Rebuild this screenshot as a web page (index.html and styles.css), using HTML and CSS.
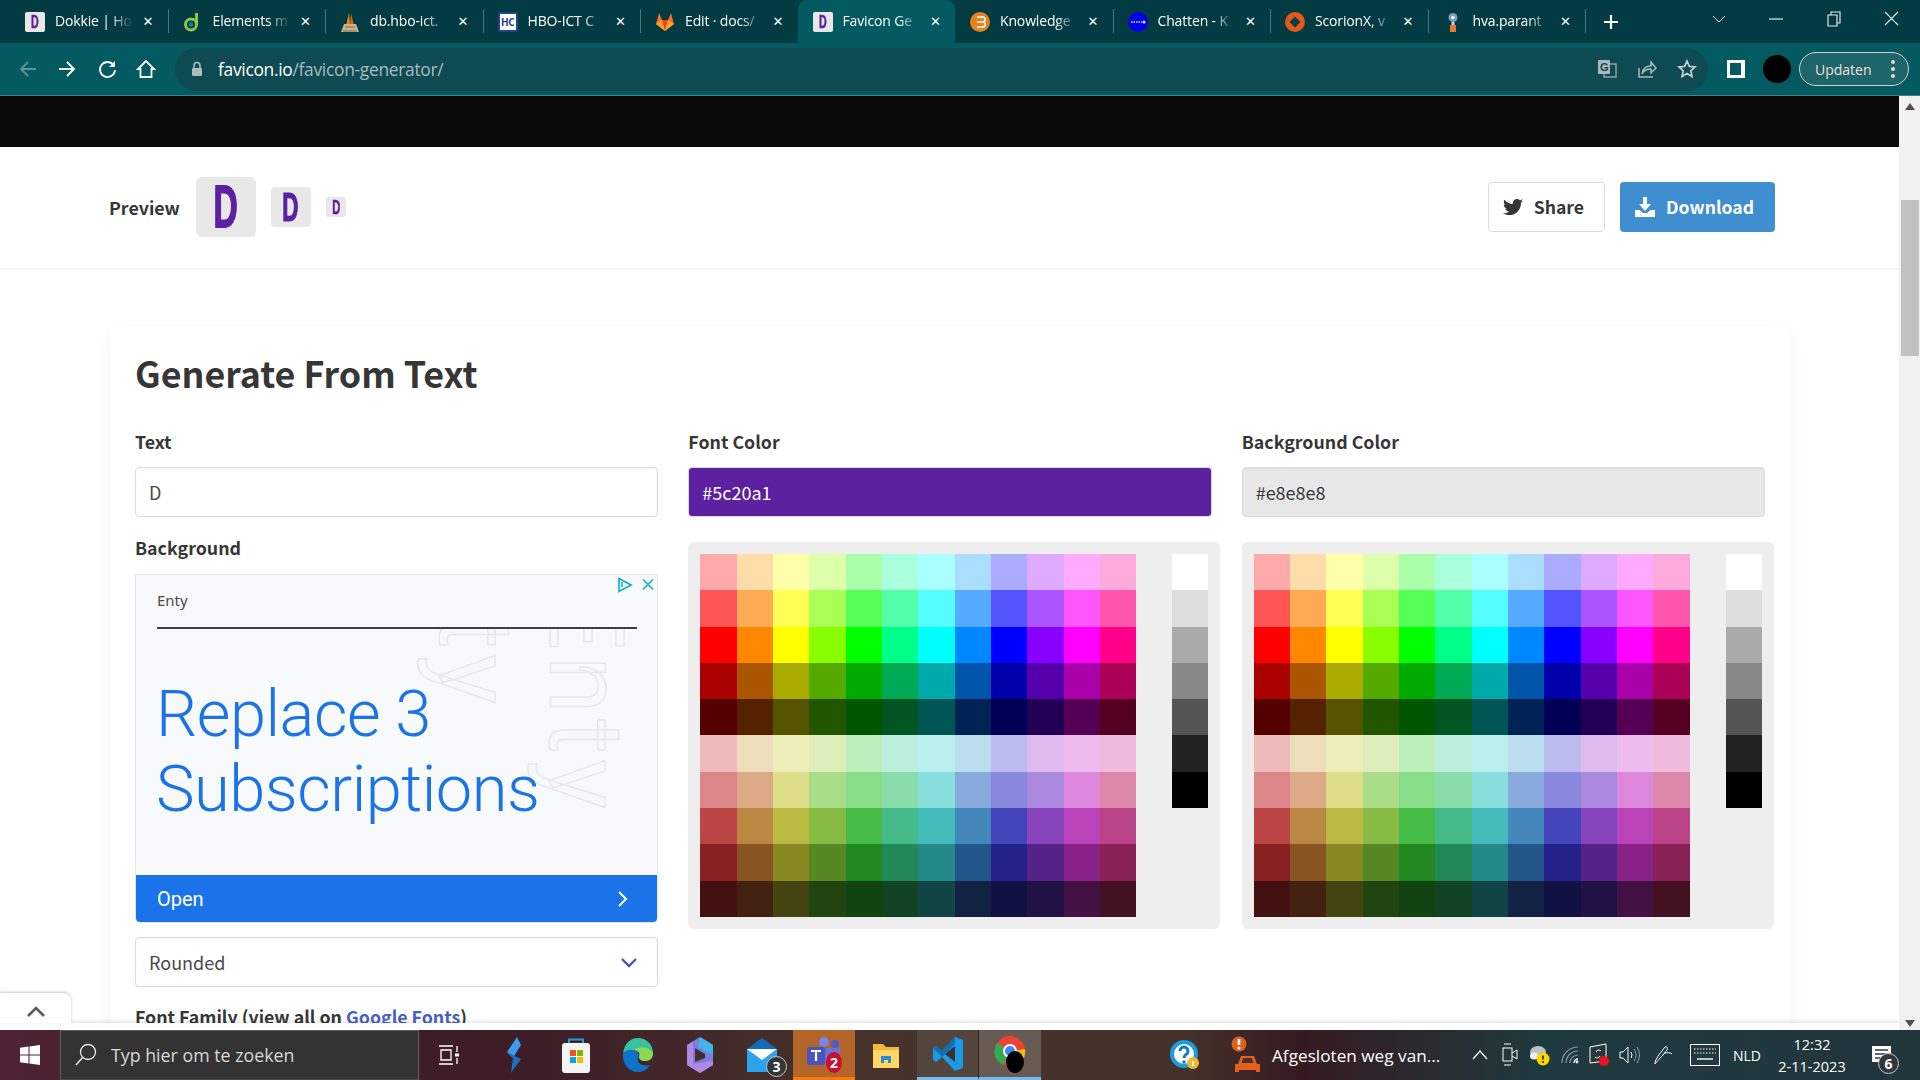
FILE: index.html
```html
<!DOCTYPE html>
<html>
<head>
<meta charset="utf-8">
<title>Favicon Generator - favicon.io</title>
<link rel="stylesheet" href="styles.css">
</head>
<body>

<!-- browser: tabs -->
<div class="tabstrip">
  <div class="tab">
    <span class="dtile fav"><b>D</b></span>
    <span class="tab-title">Dokkie | Ho</span><span class="tab-x">&#10005;</span>
  </div>
  <div class="tab">
    <svg class="fav" viewBox="0 0 20 20"><circle cx="8" cy="12.5" r="5.5" fill="none" stroke="#8cc63f" stroke-width="3"/><circle cx="8" cy="12.5" r="2.2" fill="#0a7fc2"/><path d="M13.5 1v12" stroke="#8cc63f" stroke-width="3"/></svg>
    <span class="tab-title">Elements m</span><span class="tab-x">&#10005;</span>
  </div>
  <div class="tab">
    <svg class="fav" viewBox="0 0 20 20"><path d="M6 14 9 1l1 13z" fill="#f08a1d"/><path d="M10 14 11 1l3 13z" fill="#e86a12"/><path d="M1 20 4 12h12l3 8z" fill="#c9b48a"/><path d="M3 19h14M5 15h10" stroke="#7a6a52" stroke-width="1.2"/></svg>
    <span class="tab-title">db.hbo-ict.</span><span class="tab-x">&#10005;</span>
  </div>
  <div class="tab">
    <span class="hc fav">HC</span>
    <span class="tab-title">HBO-ICT C</span><span class="tab-x">&#10005;</span>
  </div>
  <div class="tab">
    <svg class="fav" viewBox="0 0 20 20"><path d="M10 19 1 12l1.5-5L4 1l3 7h6l3-7 1.5 6 1.500 5z" fill="#fc6d26"/><path d="M10 19 7 8h6z" fill="#e24329"/><path d="M1 12l6-4 3 11zM19 12l-6-4-3 11z" fill="#fca326"/></svg>
    <span class="tab-title">Edit · docs/</span><span class="tab-x">&#10005;</span>
  </div>
  <div class="tab active">
    <span class="dtile fav"><b>D</b></span>
    <span class="tab-title">Favicon Ge</span><span class="tab-x">&#10005;</span>
  </div>
  <div class="tab">
    <svg class="fav" viewBox="0 0 20 20"><circle cx="10" cy="10" r="10" fill="#e8821e"/><path d="M7 5h5.500a2.500 2.500 0 0 1 0 5 2.500 2.500 0 0 1 0 5H7M7 10h5" fill="none" stroke="#fff" stroke-width="1.600"/></svg>
    <span class="tab-title">Knowledge</span><span class="tab-x">&#10005;</span>
  </div>
  <div class="tab">
    <svg class="fav" viewBox="0 0 20 20"><circle cx="10" cy="10" r="10" fill="#0000e6"/><path d="M3 10h11" stroke="#cfd3ff" stroke-width="1.400" stroke-dasharray="1.500 1"/><circle cx="16" cy="10" r="1.500" fill="#e8e8ff"/></svg>
    <span class="tab-title">Chatten - K</span><span class="tab-x">&#10005;</span>
  </div>
  <div class="tab">
    <svg class="fav" viewBox="0 0 20 20"><circle cx="10" cy="10" r="10" fill="#e4591a"/><path d="M10 4.500 15.500 10 10 15.500 4.500 10z" fill="#04404a"/></svg>
    <span class="tab-title">ScorionX, v</span><span class="tab-x">&#10005;</span>
  </div>
  <div class="tab">
    <svg class="fav" viewBox="0 0 20 20"><circle cx="10" cy="5.500" r="4.500" fill="#7c9cc0"/><circle cx="10" cy="5.500" r="1.800" fill="#eef3f8"/><rect x="8.500" y="10" width="3" height="3" fill="#c8d4e0"/><rect x="7" y="13" width="6" height="7" fill="#e8762a"/></svg>
    <span class="tab-title">hva.parant</span><span class="tab-x">&#10005;</span>
  </div>
  <div class="newtab">
    <svg width="16" height="16" viewBox="0 0 16 16"><path d="M8 1v14M1 8h14" stroke="#fff" stroke-width="2.200"/></svg>
  </div>
  <div class="winctl">
    <span class="winbtn"><svg width="14" height="8" viewBox="0 0 14 8"><path d="M1 1l6 6 6-6" fill="none" stroke="#c7d6d8" stroke-width="1"/></svg></span>
    <span class="winbtn"><svg width="14" height="2" viewBox="0 0 14 2"><path d="M0 1h14" stroke="#dfe8e9" stroke-width="1.200"/></svg></span>
    <span class="winbtn"><svg width="14" height="16" viewBox="0 0 14 16"><path d="M1 4h9v11H1zM4 4V1h9v11h-3" fill="none" stroke="#dfe8e9" stroke-width="1.200"/></svg></span>
    <span class="winbtn"><svg width="15" height="15" viewBox="0 0 15 15"><path d="M1 1l13 13M14 1 1 14" stroke="#dfe8e9" stroke-width="1.100"/></svg></span>
  </div>
</div>

<!-- browser: address bar -->
<div class="toolbar">
  <span class="navbtn"><svg width="20" height="20" viewBox="0 0 20 20"><path d="M18 10H3M10 3l-7 7 7 7" fill="none" stroke="#5f9296" stroke-width="1.800"/></svg></span>
  <span class="navbtn"><svg width="20" height="20" viewBox="0 0 20 20"><path d="M2 10h15M10 3l7 7-7 7" fill="none" stroke="#fff" stroke-width="1.800"/></svg></span>
  <span class="navbtn"><svg width="20" height="20" viewBox="0 0 20 20"><path d="M16.500 6A7.500 7.500 0 1 0 18 11" fill="none" stroke="#fff" stroke-width="1.800"/><path d="M18 2v6h-6z" fill="#fff"/></svg></span>
  <span class="navbtn"><svg width="20" height="20" viewBox="0 0 20 20"><path d="M10 2 2 10h2.500v8h11v-8H18z" fill="none" stroke="#fff" stroke-width="1.800"/></svg></span>
  <div class="omnibox">
    <svg class="lock" width="14" height="16" viewBox="0 0 14 16"><path d="M4 7V4.500a3 3 0 0 1 6 0V7" fill="none" stroke="#aebcbe" stroke-width="1.600"/><rect x="2" y="7" width="10" height="8" rx="1" fill="#aebcbe"/></svg>
    <span class="url"><span class="url-host">favicon.io</span>/favicon-generator/</span>
    <span class="omni-icons">
      <span class="omni-btn"><svg width="20" height="20" viewBox="0 0 20 20"><rect x="7" y="5" width="12" height="13" fill="none" stroke="#a9b8ba" stroke-width="1.200"/><rect x="1" y="1" width="12" height="14" rx="1" fill="#a9b8ba"/><text x="3" y="12" class="g-glyph">G</text></svg></span>
      <span class="omni-btn"><svg width="20" height="20" viewBox="0 0 20 20"><path d="M2 9v9h14" fill="none" stroke="#a9b8ba" stroke-width="1.500"/><path d="M5 15c0-5 4-8 9-8V3l5 6-5 5v-4c-4 0-7 1-9 5z" fill="none" stroke="#a9b8ba" stroke-width="1.500"/></svg></span>
      <span class="omni-btn"><svg width="20" height="20" viewBox="0 0 20 20"><path d="m10 2 2.400 5.400 5.600.6-4.200 3.800 1.200 5.700L10 14.600l-5 2.900 1.200-5.700L2 8l5.600-.6z" fill="none" stroke="#c3cfd0" stroke-width="1.700"/></svg></span>
    </span>
  </div>
  <span class="sidebtn"><span class="sidepanel"></span></span>
  <span class="avatarbtn"><span class="avatar"></span></span>
  <span class="update">Updaten<span class="update-dots"><i></i><i></i><i></i></span></span>
</div>

<!-- page -->
<div class="viewport">
  <div class="page">
    <div class="blackbar"></div>
    <div class="previewbar">
      <strong class="preview-label">Preview</strong>
      <span class="dtile size60"><b>D</b></span>
      <span class="dtile size40"><b>D</b></span>
      <span class="dtile size20"><b>D</b></span>
      <span class="preview-actions">
        <a class="btn">
          <svg width="20" height="20" viewBox="0 0 512 512"><path fill="#363636" d="M459.37 151.716c.325 4.548.325 9.097.325 13.645 0 138.72-105.583 298.558-298.558 298.558-59.452 0-114.68-17.219-161.137-47.106 8.447.974 16.568 1.299 25.34 1.299 49.055 0 94.213-16.568 130.274-44.832-46.132-.975-84.792-31.188-98.112-72.772 6.498.974 12.995 1.624 19.818 1.624 9.421 0 18.843-1.3 27.614-3.573-48.081-9.747-84.143-51.98-84.143-102.985v-1.299c13.969 7.797 30.214 12.67 47.431 13.319-28.264-18.843-46.781-51.005-46.781-87.391 0-19.492 5.197-37.36 14.294-52.954 51.655 63.675 129.3 105.258 216.365 109.807-1.624-7.797-2.599-15.918-2.599-24.04 0-57.828 46.782-104.934 104.934-104.934 30.213 0 57.502 12.67 76.67 33.137 23.715-4.548 46.456-13.32 66.599-25.34-7.798 24.366-24.366 44.833-46.132 57.827 21.117-2.273 41.584-8.122 60.426-16.243-14.292 20.791-32.161 39.308-52.628 54.253z"/></svg>
          Share
        </a>
        <a class="btn btn-info">
          <svg width="20" height="20" viewBox="0 0 20 20"><path d="M8 0h4v7h4l-6 7-6-7h4z" fill="#fff"/><path d="M0 13h4.500l3.500 3h4l3.500-3H20v7H0z" fill="#fff"/></svg>
          Download
        </a>
      </span>
    </div>

    <div class="card">
      <h2 class="card-title">Generate From Text</h2>
      <div class="columns">
        <div class="column">
          <label class="label">Text</label>
          <div class="input">D</div>
          <label class="label label-next">Background</label>
          <div class="ad">
            <div class="ad-brand">Enty</div>
            <div class="ad-rule"></div>
            <div class="ad-ghost">
              <span class="ghost ghost-a">Enty</span>
              <span class="ghost ghost-b">Enty</span>
            </div>
            <div class="ad-head">Replace 3<br>Subscriptions</div>
            <div class="ad-open">Open
              <svg width="12" height="18" viewBox="0 0 12 18"><path d="m2 2 7 7-7 7" fill="none" stroke="#fff" stroke-width="2"/></svg>
            </div>
            <svg class="ad-info" width="38" height="16" viewBox="0 0 38 16"><path d="M2 1.500 14 8 2 14.500z" fill="none" stroke="#00aecd" stroke-width="1.600"/><path d="M5 5v5" stroke="#00aecd" stroke-width="1.400"/><path d="m26 2.500 10 10M36 2.500l-10 10" stroke="#00aecd" stroke-width="1.400"/></svg>
          </div>
          <div class="input select">Rounded
            <svg width="18" height="11" viewBox="0 0 18 11"><path d="m2 2 7 7 7-7" fill="none" stroke="#4a52bd" stroke-width="2.400"/></svg>
          </div>
          <label class="label label-font">Font Family (view all on <a class="link">Google Fonts</a>)</label>
        </div>

        <div class="column">
          <label class="label">Font Color</label>
          <div class="input input-font">#5c20a1</div>
          <div class="picker"><div class="swatches"></div><div class="grays"></div></div>
        </div>

        <div class="column">
          <label class="label">Background Color</label>
          <div class="input input-bg">#e8e8e8</div>
          <div class="picker"><div class="swatches"></div><div class="grays"></div></div>
        </div>
      </div>
    </div>

    <div class="anchor-strip"></div>
    <div class="anchor-tab">
      <svg width="20" height="12" viewBox="0 0 20 12"><path d="m2 10 8-8 8 8" fill="none" stroke="#5a5a5a" stroke-width="2.600"/></svg>
    </div>
  </div>
  <div class="scrollbar">
    <span class="arrow-up"></span>
    <span class="thumb"></span>
    <span class="arrow-down"></span>
  </div>
</div>

<!-- windows taskbar -->
<div class="taskbar">
  <span class="startbtn"><svg width="20" height="20" viewBox="0 0 20 20"><path d="M0 2.800 8.500 1.600v8H0zM9.500 1.500 20 0v9.600H9.500zM0 10.500h8.500v8L0 17.200zM9.500 10.500H20V20L9.500 18.600z" fill="#fff"/></svg></span>
  <div class="searchbox">
    <svg width="22" height="24" viewBox="0 0 22 24"><circle cx="13" cy="9" r="7.500" fill="none" stroke="#e6e6e6" stroke-width="1.300"/><path d="M7.500 14.500 1 22" stroke="#e6e6e6" stroke-width="1.500"/></svg>
    <span>Typ hier om te zoeken</span>
  </div>
  <span class="taskview"><svg width="22" height="20" viewBox="0 0 22 20"><path d="M0 1h14M0 19h14M2 5h10v10H2zM18 1v6M18 13v6" fill="none" stroke="#fff" stroke-width="1.300"/><rect x="16" y="8.500" width="4" height="3" fill="#fff"/></svg></span>

  <span class="task"><svg width="16" height="36" viewBox="0 0 16 36"><path d="M11 0 1 15l6 6 8-13z" fill="#3a9bef"/><path d="M7 21 1 15l14 7L5 36z" fill="#1f6fc4"/></svg></span>
  <span class="task"><svg width="30" height="36" viewBox="0 0 30 36"><path d="M8 8V2.500h14V8" fill="none" stroke="#1aa3e0" stroke-width="2"/><rect x="1" y="6" width="28" height="30" rx="3" fill="#f4f4f4"/><rect x="9" y="13" width="6" height="6" fill="#f25022"/><rect x="16" y="13" width="6" height="6" fill="#7fba00"/><rect x="9" y="20" width="6" height="6" fill="#00a4ef"/><rect x="16" y="20" width="6" height="6" fill="#ffb900"/></svg></span>
  <span class="task"><svg width="32" height="36" viewBox="0 0 32 36"><path d="M1 17C2 7 8 1 16 1c9 0 15 7 15 15 0 5-3 8-8 8-4 0-6-2-6-4 2-4-1-7-6-7-5 0-9 2-10 4z" fill="#36c2a0"/><path d="M1 17c2-3 6-5 9-4 5 0 8 3 6 8-1 5 4 9 12 7-3 5-7 7-12 7C7 35 0 27 1 17z" fill="#0f72c9"/><path d="M31 16c0 5-3 8-8 8-4 0-6-2-6-4 2-4-1-7-6-7 9-5 16-3 20 3z" fill="#8ed850"/></svg></span>
  <span class="task"><svg width="28" height="36" viewBox="0 0 28 36"><path d="M14 0 27 8v20l-13 8L1 28V8z" fill="#7d7de0"/><path d="M14 0 27 8v10L12 10z" fill="#3fb6e8"/><path d="M1 8l6-3v22l20-3v4l-13 8L1 28z" fill="#b287e6"/><path d="M9 11l10 6v4l-10 4z" fill="#40302c"/></svg></span>
  <span class="task task-mail"><svg width="32" height="36" viewBox="0 0 32 36"><path d="M16 1 1 12h30z" fill="#0f6cbd"/><rect x="1" y="12" width="30" height="23" fill="#2aa3ec"/><path d="M1 12h30L16 23z" fill="#fff"/></svg><span class="badge badge-ring">3</span></span>
  <span class="task task-on"><svg width="34" height="36" viewBox="0 0 34 36"><circle cx="17" cy="6" r="5" fill="#7b83eb"/><circle cx="28" cy="8" r="4" fill="#5059c9"/><path d="M11 12h22v14H11z" fill="#6a72d8"/><rect x="0" y="11" width="18" height="18" rx="2" fill="#4b53bc"/><path d="M4 15h10M9 15v10" stroke="#fff" stroke-width="2.200"/></svg><span class="badge badge-red">2</span></span>
  <span class="task"><svg width="28" height="28" viewBox="0 0 28 28"><path d="M1 3h10l3 3h13v21H1z" fill="#f2b63d"/><path d="M1 9h26v18H1z" fill="#ffd763"/><path d="M9 22v-7h10v7h-3v-3h-4v3z" fill="#2d8ad6"/></svg></span>
  <span class="task task-open"><svg width="30" height="36" viewBox="0 0 30 36"><path d="M22 1 9 15 3 10 0 12v12l3 2 6-5 13 14 8-3V4z" fill="#1a9ae8"/><path d="M22 10v16l-10-8z" fill="#3f2f28"/><path d="M22 1 9 15 3 10 0 12l9 9L22 8z" fill="#0c6fb8"/></svg></span>
  <span class="task task-open task-chrome"><svg width="32" height="38" viewBox="0 0 32 38"><circle cx="16" cy="16" r="15" fill="#ea4335"/><path d="M16 16 3 8A15 15 0 0 0 9 30z" fill="#34a853"/><path d="M16 16 31 14A15 15 0 0 1 12 31z" fill="#fbbc05"/><circle cx="16" cy="16" r="7" fill="#fff"/><circle cx="16" cy="16" r="5" fill="#4285f4"/><ellipse cx="21" cy="27" rx="9" ry="11" fill="#000"/></svg></span>

  <span class="helpicon"><svg width="30" height="30" viewBox="0 0 30 30"><circle cx="14" cy="14" r="12" fill="#fff" stroke="#1b9be0" stroke-width="4"/><path d="M10 11a4 4 0 1 1 6 3.500c-1.500 1-2 1.500-2 3.500" fill="none" stroke="#1478c8" stroke-width="3"/><circle cx="14" cy="22" r="1.800" fill="#1478c8"/><circle cx="23" cy="23" r="6" fill="#f2b630"/><path d="M23 21v5" stroke="#fff" stroke-width="2"/></svg></span>
  <div class="alert">
    <svg width="30" height="38" viewBox="0 0 30 38"><circle cx="8" cy="8" r="7.500" fill="#e2601c"/><path d="M8 3v6" stroke="#fff" stroke-width="2.600"/><circle cx="8" cy="12" r="1.500" fill="#fff"/><path d="M7 28l3-8h13l3 8h3v8h-4v-2H8v2H4v-8z" fill="#e2601c"/><path d="M10.500 27l1.800-5h8.400l1.800 5z" fill="#45302a"/></svg>
    <span>Afgesloten weg van...</span>
  </div>
  <div class="tray">
    <span class="tray-cell"><svg width="16" height="10" viewBox="0 0 16 10"><path d="M1 9l7-8 7 8" fill="none" stroke="#fff" stroke-width="1.200"/></svg></span>
    <span class="tray-cell"><svg width="16" height="24" viewBox="0 0 16 24"><rect x="1" y="5" width="9" height="13" fill="none" stroke="#fff"/><path d="M10 10l5-3v9l-5-3M2 1h7M2 22h7" fill="none" stroke="#fff"/></svg></span>
    <span class="tray-cell"><svg width="22" height="24" viewBox="0 0 22 24"><ellipse cx="9" cy="9" rx="8" ry="6" fill="#b9c2c4"/><ellipse cx="5" cy="13" rx="4" ry="3.500" fill="#eef1f2"/><circle cx="14" cy="16" r="6.500" fill="#ffd500"/><path d="M14 12.500v4" stroke="#222" stroke-width="1.600"/><circle cx="14" cy="19" r="1" fill="#222"/></svg></span>
    <span class="tray-cell"><svg width="18" height="18" viewBox="0 0 18 18"><path d="M1 17A16 16 0 0 1 17 1M5 17A12 12 0 0 1 17 5M9 17a8 8 0 0 1 8-8" fill="none" stroke="#8d9a9c" stroke-width="1.200"/><path d="M13 17a4 4 0 0 1 4-4" fill="none" stroke="#fff" stroke-width="1.400"/><circle cx="16" cy="16" r="1.400" fill="#fff"/></svg></span>
    <span class="tray-cell"><svg width="22" height="24" viewBox="0 0 22 24"><path d="M1 4l16-3v17L1 20z" fill="#26363a" stroke="#fff"/><path d="M7 9a3 3 0 0 1 5-1M11 13a3 3 0 0 1-5 1" fill="none" stroke="#fff"/><circle cx="15" cy="18" r="5" fill="#e81123"/></svg></span>
    <span class="tray-cell"><svg width="22" height="18" viewBox="0 0 22 18"><path d="M1 6h3l5-5v16l-5-5H1z" fill="none" stroke="#fff"/><path d="M12 6q2 3 0 6" fill="none" stroke="#fff"/><path d="M15 3q4 6 0 12M18 1q5 8 0 16" fill="none" stroke="#8d9a9c"/></svg></span>
    <span class="tray-cell tray-pen"><svg width="20" height="20" viewBox="0 0 20 20"><path d="M2 19c0-4 3-8 7-13l3-4c2-1 3 1 2 3l-4 5c-4 4-7 8-8 9z" fill="none" stroke="#fff"/><path d="M11 8c3 0 7-1 8 1" fill="none" stroke="#fff"/></svg></span>
    <span class="tray-cell tray-kbd"><svg width="30" height="22" viewBox="0 0 30 22"><rect x=".5" y=".5" width="29" height="21" fill="none" stroke="#fff"/><path d="M4 5h22M4 9h22" stroke="#fff" stroke-dasharray="1.500 1.500"/><path d="M7 15h16" stroke="#fff" stroke-width="1.400"/></svg></span>
    <span class="tray-lang">NLD</span>
    <span class="clock"><span>12:32</span><span>2-11-2023</span></span>
    <span class="notif"><svg width="19" height="16" viewBox="0 0 19 16"><path d="M0 0h19v16H0z" fill="#fff"/><path d="M3 4h13M3 8h13M3 12h9" stroke="#2a3a3e" stroke-width="1.300"/></svg><span class="badge badge-ring badge-notif">6</span></span>
  </div>
</div>

<script src="app.js"></script>
</body>
</html>
```

FILE: styles.css
```css
* {
  box-sizing: border-box;
}
html, body {
  margin: 0;
  padding: 0;
  height: 1080px;
  overflow: hidden;
}
body {
  display: flex;
  flex-direction: column;
  background: #fff;
  font-family: "Open Sans", "Noto Sans", sans-serif;
  color: #363636;
}

/* tabs */
.tabstrip {
  height: 43px;
  flex: none;
  display: flex;
  align-items: stretch;
  padding-left: 10px;
  background: #033b43;
}
.tab {
  position: relative;
  width: 157.5px;
  display: flex;
  align-items: center;
  padding-left: 15px;
  color: #fff;
}
.tab::after {
  content: "";
  position: absolute;
  right: -1px;
  top: 9px;
  height: 24px;
  width: 1px;
  background: #47767c;
}
.tab:nth-child(5)::after,
.tab.active::after {
  display: none;
}
.tab.active {
  background: #035a60;
  border-radius: 9px 9px 0 0;
}
.fav {
  width: 20px;
  height: 20px;
  flex: none;
}
.tab-title {
  width: 78px;
  margin: 0 0 2px 10px;
  font-size: 14px;
  letter-spacing: -0.15px;
  white-space: nowrap;
  overflow: hidden;
  -webkit-mask-image: linear-gradient(to right, #000 70%, transparent 100%);
  mask-image: linear-gradient(to right, #000 70%, transparent 100%);
}
.tab-x {
  width: 16px;
  margin: 0 0 1px 7px;
  text-align: center;
  font-size: 13px;
  font-weight: 700;
  font-family: "DejaVu Sans", sans-serif;
}
.newtab {
  width: 52px;
  display: flex;
  align-items: center;
  justify-content: center;
}
.winctl {
  margin-left: auto;
  display: flex;
}
.winbtn {
  width: 57.5px;
  display: flex;
  align-items: center;
  justify-content: center;
  padding-bottom: 6px;
}
.hc {
  display: flex;
  align-items: center;
  justify-content: center;
  background: #fff;
  border: 2px solid #24408e;
  border-radius: 2px;
  color: #24408e;
  font-size: 10px;
  font-weight: 700;
  letter-spacing: -0.5px;
}

/* the D favicon, used in the tabs and in the preview */
.dtile {
  display: flex;
  align-items: center;
  justify-content: center;
  background: #e8e8e8;
  border-radius: 2px;
  flex: none;
}
.dtile b {
  display: block;
  color: #5c20a1;
  font-family: "Liberation Sans", sans-serif;
  font-size: 19px;
  line-height: 1;
  transform: scaleX(0.56);
  -webkit-text-stroke: 0.03em #5c20a1;
}
.size60 {
  width: 60px;
  height: 60px;
  border-radius: 6px;
}
.size60 b {
  font-size: 60px;
}
.size40 {
  width: 40px;
  height: 40px;
  border-radius: 4px;
}
.size40 b {
  font-size: 40px;
}
.size20 {
  width: 20px;
  height: 20px;
}
.size20 b {
  font-size: 20px;
}

/* address bar */
.toolbar {
  height: 53px;
  flex: none;
  display: flex;
  align-items: center;
  padding: 0 11px 0 8px;
  background: #035a60;
  border-bottom: 1px solid #3f8287;
}
.navbtn {
  width: 39.5px;
  display: flex;
  justify-content: center;
}
.omnibox {
  flex: 1;
  height: 43px;
  margin-left: 9px;
  padding: 0 1px 0 15px;
  display: flex;
  align-items: center;
  background: #0e4a52;
  border-radius: 22px;
}
.url {
  margin-left: 14px;
  font-size: 17.4px;
  letter-spacing: -0.3px;
  color: #a9bcbf;
}
.url-host {
  color: #fff;
}
.omni-icons {
  margin-left: auto;
  display: flex;
}
.omni-btn {
  width: 40px;
  display: flex;
  justify-content: center;
}
.g-glyph {
  font-family: "Liberation Sans", sans-serif;
  font-size: 11px;
  font-weight: 700;
  fill: #0e4a52;
}
.sidebtn {
  width: 40px;
  margin-left: 8px;
  display: flex;
  justify-content: center;
}
.sidepanel {
  width: 18px;
  height: 18px;
  background: linear-gradient(to right, #035a60 0, #035a60 11px, #fff 11px);
  border: 3px solid #fff;
  border-right-width: 0;
}
.avatarbtn {
  width: 42px;
  display: flex;
  justify-content: center;
}
.avatar {
  width: 28px;
  height: 28px;
  border-radius: 50%;
  background: #000;
}
.update {
  width: 110px;
  height: 34px;
  margin-left: 1px;
  padding-left: 15px;
  display: flex;
  align-items: center;
  background: #1c666b;
  border: 1.5px solid #d9d0cb;
  border-radius: 17px;
  color: #f5dfda;
  font-size: 14px;
}
.update-dots {
  margin-left: auto;
  margin-right: 13px;
  display: flex;
  flex-direction: column;
  gap: 3px;
}
.update-dots i {
  display: block;
  width: 4px;
  height: 4px;
  border-radius: 50%;
  background: #f0d5cf;
}

/* page */
.viewport {
  flex: 1;
  min-height: 0;
  display: flex;
}
.page {
  position: relative;
  flex: 1;
  min-width: 0;
  overflow: hidden;
  font-family: "Noto Sans CJK SC", "Noto Sans", sans-serif;
}
.blackbar {
  height: 51px;
  background: #0a0a0a;
}
.previewbar {
  height: 123px;
  display: flex;
  align-items: center;
  gap: 15px;
  padding: 0 124px 2px 109px;
  border-bottom: 2px solid #f5f5f5;
}
.preview-label {
  margin-right: 1px;
  font-size: 17.8px;
  font-weight: 700;
}
.preview-actions {
  margin-left: auto;
  display: flex;
  gap: 15px;
}
.btn {
  height: 50px;
  padding: 0 20px 0 14px;
  display: flex;
  align-items: center;
  gap: 11px;
  background: #fff;
  border: 1px solid #dbdbdb;
  border-radius: 4px;
  font-size: 17.6px;
  font-weight: 700;
  color: #363636;
}
.btn-info {
  background: #3e8ed0;
  border-color: transparent;
  color: #fff;
}
.card {
  width: 1680px;
  margin: 56px 0 0 110px;
  padding: 25px;
  background: #fff;
  border-radius: 6px;
  box-shadow: 0 8px 16px rgba(10, 10, 10, 0.06), 0 0 1px rgba(10, 10, 10, 0.04);
}
.card-title {
  margin: 0 0 35px;
  font-size: 35.8px;
  line-height: 43px;
  font-weight: 700;
}
.columns {
  display: grid;
  grid-template-columns: repeat(3, minmax(0, 1fr));
  gap: 30px;
}
.label {
  display: block;
  margin-bottom: 13px;
  font-size: 17.8px;
  line-height: 25px;
  font-weight: 700;
}
.label-next {
  margin-top: 18px;
  margin-bottom: 14px;
}
.label-font {
  margin-top: 17px;
}
.link {
  color: #485fc7;
}
.input {
  height: 50px;
  padding: 0 14px 0 13px;
  display: flex;
  align-items: center;
  background: #fff;
  border: 1px solid #dbdbdb;
  border-radius: 4px;
  box-shadow: inset 0 1px 2px rgba(10, 10, 10, 0.05);
  font-size: 18px;
  color: #4a4a4a;
}
.input-font {
  background: #5c20a1;
  color: #fff;
}
.input-bg {
  background: #e8e8e8;
  color: #363636;
}
.select {
  margin-top: 14px;
  justify-content: space-between;
  padding-right: 19px;
}

/* colour pickers */
.picker {
  width: 532px;
  height: 387px;
  margin-top: 25px;
  padding: 12px;
  display: flex;
  align-items: flex-start;
  gap: 36px;
  background: #eee;
  border-radius: 6px;
}
.swatches {
  width: 436px;
  height: 363px;
  flex: none;
  display: grid;
  grid-template-columns: repeat(12, 1fr);
  grid-template-rows: repeat(10, 1fr);
}
.grays {
  width: 36px;
  height: 254px;
  flex: none;
  display: grid;
  grid-template-rows: repeat(7, 1fr);
}

/* ad */
.ad {
  position: relative;
  height: 349px;
  background: #f8f9fb;
  border: 1px solid #e6e6e8;
  border-radius: 0 0 5px 5px;
  display: flex;
  flex-direction: column;
  overflow: hidden;
  font-family: Roboto, sans-serif;
}
.ad-brand {
  height: 52px;
  padding: 13px 0 0 21px;
  font-size: 15px;
  line-height: 24px;
  color: #4a4a4a;
  font-family: "Noto Sans", sans-serif;
}
.ad-rule {
  height: 2px;
  margin: 0 20px 0 21px;
  background: #3c4043;
}
.ad-ghost {
  position: absolute;
  left: 0;
  right: 0;
  top: 54px;
  bottom: 47px;
  overflow: hidden;
}
.ghost {
  position: absolute;
  writing-mode: vertical-rl;
  font-size: 104px;
  line-height: 1;
  letter-spacing: 6px;
  color: transparent;
  -webkit-text-stroke: 1.5px #e6e7ea;
  white-space: nowrap;
}
.ghost-a {
  left: 397px;
  top: -38px;
}
.ghost-b {
  left: 287px;
  top: -143px;
}
.ad-head {
  position: relative;
  margin-top: 48px;
  padding-left: 20px;
  flex: 1;
  font-size: 65px;
  line-height: 75px;
  letter-spacing: -0.5px;
  font-weight: 300;
  color: #1a73e8;
}
.ad-open {
  position: relative;
  height: 47px;
  flex: none;
  padding: 0 28px 0 21px;
  display: flex;
  align-items: center;
  justify-content: space-between;
  background: #1a73e8;
  font-size: 20px;
  color: #fff;
}
.ad-info {
  position: absolute;
  right: 2px;
  top: 2px;
}

/* things stuck to the bottom of the page */
.anchor-strip {
  position: absolute;
  left: 0;
  right: 0;
  bottom: 0;
  height: 7px;
  background: #fff;
  box-shadow: 0 -1px 4px rgba(0, 0, 0, 0.14);
}
.anchor-tab {
  position: absolute;
  left: 0;
  bottom: 7px;
  width: 71px;
  height: 30px;
  padding-top: 8px;
  display: flex;
  align-items: center;
  justify-content: center;
  background: #fff;
  border-radius: 0 8px 0 0;
  box-shadow: 0 -1px 3px rgba(0, 0, 0, 0.22);
}
.scrollbar {
  position: relative;
  width: 21px;
  flex: none;
  display: flex;
  flex-direction: column;
  align-items: center;
  background: #f1f1f1;
}
.arrow-up {
  margin-top: 7px;
  border: 5px solid transparent;
  border-top-width: 0;
  border-bottom: 7px solid #505050;
}
.thumb {
  width: 18px;
  height: 156px;
  margin-top: 90px;
  background: #c1c1c1;
}
.arrow-down {
  margin-top: auto;
  margin-bottom: 3px;
  border: 5px solid transparent;
  border-bottom-width: 0;
  border-top: 7px solid #505050;
}

/* windows taskbar */
.taskbar {
  height: 50px;
  flex: none;
  display: flex;
  align-items: stretch;
  background: linear-gradient(to right, #4f2333 0, #3d1c26 26%, #46332c 45%, #45302a 62%, #351b21 68%, #1f3a3f 80%, #22363c 100%);
  color: #fff;
}
.startbtn {
  width: 60px;
  flex: none;
  display: flex;
  align-items: center;
  justify-content: center;
}
.searchbox {
  width: 359px;
  flex: none;
  padding-left: 14px;
  display: flex;
  align-items: center;
  gap: 14px;
  background: #333;
  border: 1px solid #5f5f5f;
  border-bottom-color: #4a4a4a;
  font-size: 17.8px;
  color: #d8d8d8;
}
.taskview {
  width: 64px;
  flex: none;
  display: flex;
  align-items: center;
  justify-content: center;
  padding-right: 2px;
}
.task {
  position: relative;
  width: 62px;
  flex: none;
  display: flex;
  align-items: center;
  justify-content: center;
}
.task-on {
  background: #b4652a;
  border-bottom: 3px solid #f7790f;
}
.task-open {
  background: #54453c;
  border-bottom: 3px solid #76b9ed;
  border-right: 1px solid #33261f;
}
.task-chrome {
  background: #665a52;
  border-right: 0;
}
.badge {
  position: absolute;
  display: flex;
  align-items: center;
  justify-content: center;
  border-radius: 50%;
  font-size: 14px;
  font-weight: 700;
}
.badge-ring {
  right: 6px;
  bottom: 3px;
  width: 21px;
  height: 21px;
  background: #33363b;
  border: 1px solid #c9c9c9;
}
.badge-red {
  right: 13px;
  bottom: 4px;
  width: 16px;
  height: 21px;
  background: #c8102e;
}
.helpicon {
  width: 40px;
  margin-left: 124px;
  display: flex;
  align-items: center;
  justify-content: center;
}
.alert {
  width: 260px;
  padding-left: 26px;
  display: flex;
  align-items: center;
  gap: 11px;
  font-size: 17.2px;
  white-space: nowrap;
}
.tray {
  display: flex;
  align-items: center;
  height: 100%;
}
.tray-cell {
  width: 30px;
  display: flex;
  justify-content: center;
}
.tray-pen {
  margin-left: 3px;
}
.tray-kbd {
  width: 54px;
}
.tray-lang {
  width: 30px;
  font-size: 14px;
  text-align: center;
}
.clock {
  width: 100px;
  display: flex;
  flex-direction: column;
  align-items: center;
  gap: 3px;
  font-size: 14.5px;
  line-height: 19px;
}
.notif {
  position: relative;
  width: 38px;
  height: 100%;
  padding: 16px 0 0 0;
  display: flex;
  justify-content: center;
}
.badge-notif {
  right: 1px;
  top: 23px;
  bottom: auto;
}
```

FILE: app.js
```js
// fills both colour pickers
var rows = [
  ['#ffaaaa','#ffddaa','#ffffaa','#ddffaa','#aaffaa','#aaffdd','#aaffff','#aaddff','#aaaaff','#ddaaff','#ffaaff','#ffaadd'],
  ['#ff5555','#ffaa55','#ffff55','#aaff55','#55ff55','#55ffaa','#55ffff','#55aaff','#5555ff','#aa55ff','#ff55ff','#ff55aa'],
  ['#ff0000','#ff8800','#ffff00','#88ff00','#00ff00','#00ff88','#00ffff','#0088ff','#0000ff','#8800ff','#ff00ff','#ff0088'],
  ['#aa0000','#aa5500','#aaaa00','#55aa00','#00aa00','#00aa55','#00aaaa','#0055aa','#0000aa','#5500aa','#aa00aa','#aa0055'],
  ['#550000','#552200','#555500','#225500','#005500','#005522','#005555','#002255','#000055','#220055','#550055','#550022'],
  ['#eebbbb','#eeddbb','#eeeebb','#ddeebb','#bbeebb','#bbeedd','#bbeeee','#bbddee','#bbbbee','#ddbbee','#eebbee','#eebbdd'],
  ['#dd8888','#ddaa88','#dddd88','#aadd88','#88dd88','#88ddaa','#88dddd','#88aadd','#8888dd','#aa88dd','#dd88dd','#dd88aa'],
  ['#bb4444','#bb8844','#bbbb44','#88bb44','#44bb44','#44bb88','#44bbbb','#4488bb','#4444bb','#8844bb','#bb44bb','#bb4488'],
  ['#882222','#885522','#888822','#558822','#228822','#228855','#228888','#225588','#222288','#552288','#882288','#882255'],
  ['#441111','#442211','#444411','#224411','#114411','#114422','#114444','#112244','#111144','#221144','#441144','#441122']
];
var grays = ['#ffffff','#dddddd','#aaaaaa','#888888','#555555','#222222','#000000'];

function addCells(parent, colors) {
  colors.forEach(function(color) {
    var cell = document.createElement('div');
    cell.style.background = color;
    parent.appendChild(cell);
  });
}

document.querySelectorAll('.swatches').forEach(function(el) {
  rows.forEach(function(row) {
    addCells(el, row);
  });
});
document.querySelectorAll('.grays').forEach(function(el) {
  addCells(el, grays);
});
```
